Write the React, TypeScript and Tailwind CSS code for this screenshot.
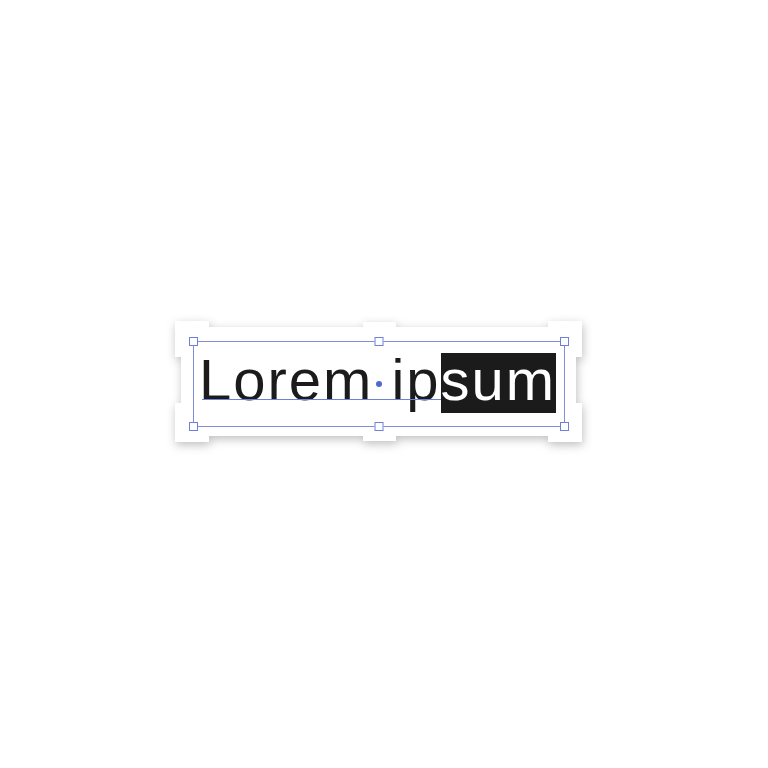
import React from "react";

const Handle = ({ pos }: { pos: string }) => (
  <div className={`absolute w-[9px] h-[9px] bg-white border border-[#6f80d8] ${pos}`} />
);

export default function App() {
  return (
    <div className="w-[768px] h-[768px] bg-white pt-[321px] pl-[175px] font-['Liberation_Sans',Arial,sans-serif]">
      <div className="w-[407px] h-[121px] [filter:drop-shadow(1px_3px_5px_rgba(0,0,0,0.25))]">
        <div className="w-[407px] h-[121px] bg-white pt-[20px] pl-[18px] [clip-path:polygon(0_0,34px_0,34px_6px,188px_6px,188px_1px,221px_1px,221px_6px,373px_6px,373px_0,407px_0,407px_36px,401px_36px,401px_82px,407px_82px,407px_121px,373px_121px,373px_115px,221px_115px,221px_120px,188px_120px,188px_115px,34px_115px,34px_121px,0_121px,0_82px,6px_82px,6px_36px,0_36px)]">
          <div className="relative box-border w-[372px] h-[86px] border border-[#7f8fdc]">
            <div className="pt-[6px] pl-[5px] text-[58px] leading-[64px] tracking-[2px] text-[#1b1b1b] whitespace-nowrap">
              Lorem
              <span className="inline-block w-[18px]">
                <span className="inline-block w-[6px] h-[6px] rounded-full bg-[#5069cf] ml-[2.5px] align-[13px]" />
              </span>
              ip
              <span className="inline-block h-[60px] leading-[54px] bg-[#1b1b1b] text-white">sum</span>
            </div>
            <div className="absolute left-[8px] top-[57px] w-[239px] h-px bg-[#6f80d8]" />
            <Handle pos="left-[-5px] top-[-5px]" />
            <Handle pos="left-1/2 -translate-x-1/2 top-[-5px]" />
            <Handle pos="right-[-5px] top-[-5px]" />
            <Handle pos="left-[-5px] bottom-[-5px]" />
            <Handle pos="left-1/2 -translate-x-1/2 bottom-[-5px]" />
            <Handle pos="right-[-5px] bottom-[-5px]" />
          </div>
        </div>
      </div>
    </div>
  );
}
